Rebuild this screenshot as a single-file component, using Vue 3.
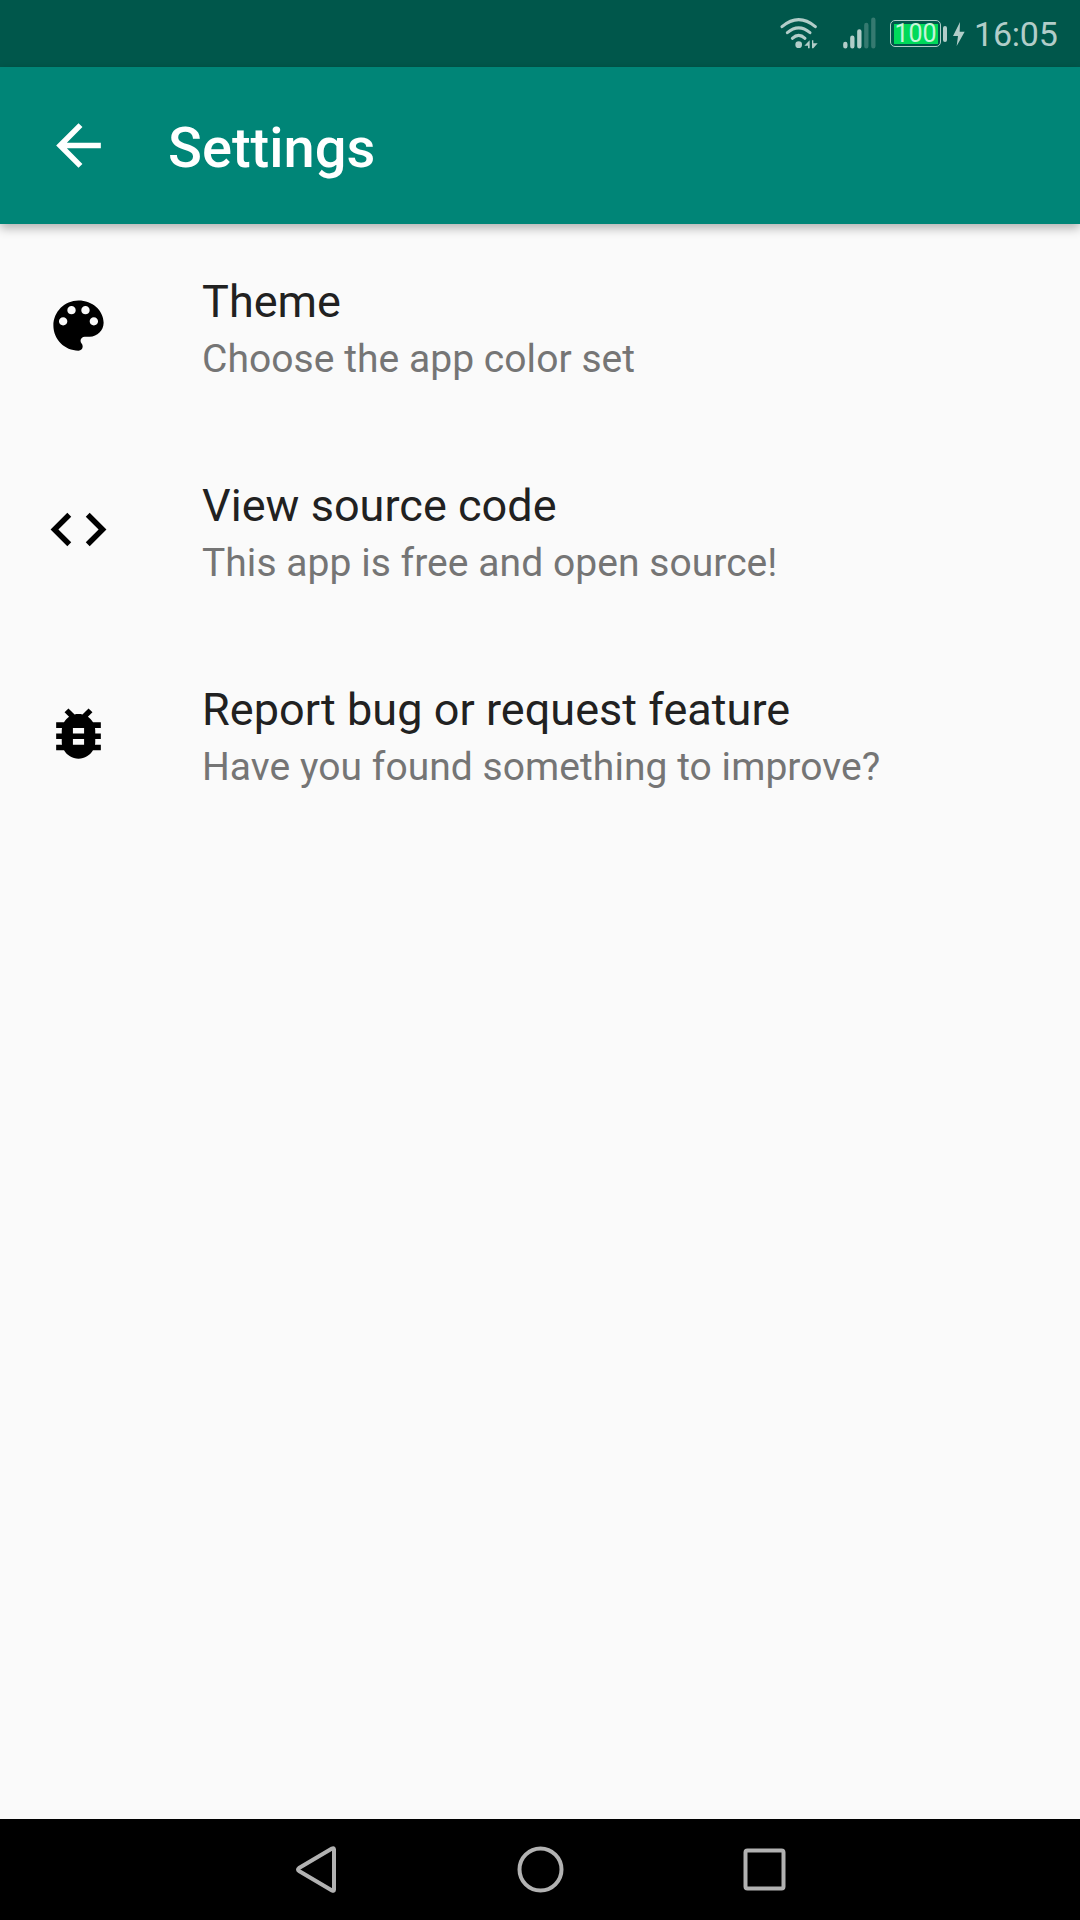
<script setup>
const items = [
  {
    title: 'Theme',
    summary: 'Choose the app color set',
    icon: 'M12 3c-4.97 0-9 4.03-9 9s4.03 9 9 9c.83 0 1.5-.67 1.5-1.5 0-.39-.15-.74-.39-1.01-.23-.26-.38-.61-.38-.99 0-.83.67-1.5 1.5-1.5H16c2.76 0 5-2.24 5-5 0-4.42-4.03-8-9-8zm-5.5 9c-.83 0-1.5-.67-1.5-1.5S5.67 9 6.5 9 8 9.67 8 10.5 7.33 12 6.5 12zm3-4C8.67 8 8 7.33 8 6.5S8.67 5 9.5 5s1.5.67 1.5 1.5S10.33 8 9.5 8zm5 0c-.83 0-1.5-.67-1.5-1.5S13.67 5 14.5 5s1.5.67 1.5 1.5S15.33 8 14.5 8zm3 4c-.83 0-1.5-.67-1.5-1.5S16.67 9 17.5 9s1.5.67 1.5 1.5-.67 1.5-1.5 1.5z',
  },
  {
    title: 'View source code',
    summary: 'This app is free and open source!',
    icon: 'M9.4 16.6L4.8 12l4.6-4.6L8 6l-6 6 6 6 1.4-1.4zm5.2 0l4.6-4.6-4.6-4.6L16 6l6 6-6 6-1.4-1.4z',
  },
  {
    title: 'Report bug or request feature',
    summary: 'Have you found something to improve?',
    icon: 'M20 8h-2.81c-.45-.78-1.07-1.45-1.82-1.96L17 4.41 15.59 3l-2.17 2.17C12.96 5.06 12.49 5 12 5c-.49 0-.96.06-1.41.17L8.41 3 7 4.41l1.62 1.63C7.88 6.55 7.26 7.22 6.81 8H4v2h2.09c-.05.33-.09.66-.09 1v1H4v2h2v1c0 .34.04.67.09 1H4v2h2.81c1.04 1.79 2.97 3 5.19 3s4.15-1.21 5.19-3H20v-2h-2.09c.05-.33.09-.66.09-1v-1h2v-2h-2v-1c0-.34-.04-.67-.09-1H20V8zm-6 8h-4v-2h4v2zm0-4h-4v-2h4v2z',
  },
]
</script>

<template>
  <div class="screen">
    <div class="status">
      <svg class="wifi" width="40" height="67" viewBox="0 0 120 201">
        <g fill="none" stroke="#b2cdc9" stroke-width="9" stroke-linecap="round">
          <path d="M6 80Q56 38 106 80" />
          <path d="M22 98Q56 69 90 98" />
          <path d="M37 115Q56 97 75 115" />
        </g>
        <g fill="#b2cdc9">
          <circle cx="56" cy="134" r="10" />
          <path d="M89 121v24h-5v-8H73zM96 121h4v9h13L100 145h-4z" />
        </g>
      </svg>
      <svg class="signal" width="34" height="67" viewBox="0 0 102 201">
        <g stroke="#b2cdc9" stroke-width="13" stroke-linecap="round">
          <path d="M7 132V139M28 113V139M49 94V139" />
          <path d="M70 75V139M91 59V139" stroke="#357a70" />
        </g>
      </svg>
      <div class="battery"><div class="level"><span>100</span></div></div>
      <div class="nub"></div>
      <svg class="bolt" width="12" height="24" viewBox="0 0 36 72">
        <path fill="#b2cdc9" d="M21 0L0 42H15L11 72 35 29H20z" />
      </svg>
      <span class="clock">16:05</span>
    </div>

    <header class="appbar">
      <svg class="back" width="67" height="67" viewBox="0 0 24 24">
        <path fill="#fff" d="M20 11H7.83l5.59-5.59L12 4l-8 8 8 8 1.41-1.41L7.83 13H20v-2z" />
      </svg>
      <h1>Settings</h1>
    </header>

    <main>
      <div v-for="item in items" :key="item.title" class="row">
        <svg class="icon" width="67" height="67" viewBox="0 0 24 24">
          <path :d="item.icon" />
        </svg>
        <div class="text">
          <div class="title">{{ item.title }}</div>
          <div class="summary">{{ item.summary }}</div>
        </div>
      </div>
    </main>

    <nav>
      <svg width="672" height="101" viewBox="0 0 672 101" fill="none" stroke="#b2b2b2" stroke-width="4" stroke-linejoin="round">
        <path d="M130 30.5Q130 28.5 128 29.5L95 49Q93 50.500 95 52L128 71.5Q130 72.5 130 70.5Z" />
        <circle cx="336.5" cy="50.5" r="21" />
        <rect x="541.5" y="31.5" width="38" height="38" rx="2" />
      </svg>
    </nav>
  </div>
</template>

<style>
body { margin: 0; }
</style>

<style scoped>
.screen {
  width: 1080px;
  height: 1920px;
  display: flex;
  flex-direction: column;
  background: #fafafa;
  font-family: Roboto, sans-serif;
  overflow: hidden;
}
.status {
  height: 67px;
  flex: none;
  box-sizing: border-box;
  padding-left: 780px;
  background: #00574b;
  color: #b2cdc9;
  display: flex;
  align-items: center;
}
.signal { margin-left: 23px; }
.battery {
  margin-left: 13px;
  box-sizing: border-box;
  width: 51px;
  height: 27px;
  border: 1.5px solid #b2cdc9;
  border-radius: 5px;
  padding: 2.5px;
}
.level {
  height: 20px;
  margin-top: 0.5px;
  background: #00d95a;
  color: #c5f5da;
  font-size: 25px;
  line-height: 20px;
  display: flex;
  justify-content: center;
}
.nub {
  width: 4px;
  height: 16px;
  margin-left: 2px;
  border-radius: 2px;
  background: #b2cdc9;
}
.bolt { margin-left: 6px; }
.clock {
  margin-left: 9px;
  padding-top: 1px;
  font-size: 34px;
  line-height: 67px;
  letter-spacing: -0.2px;
}
.appbar {
  position: relative;
  height: 157px;
  flex: none;
  display: flex;
  align-items: center;
  padding-left: 45px;
  background: #008577;
  box-shadow: 0 4px 10px rgba(0, 0, 0, 0.3);
}
h1 {
  margin: 5px 0 0 56px;
  color: #fff;
  font-size: 56px;
  line-height: 66px;
  font-weight: 500;
}
main { flex: 1; }
.row {
  height: 204px;
  display: flex;
  padding-left: 45px;
}
.icon { margin-top: 67.5px; flex: none; }
.text { margin: 51px 0 0 90px; }
.title {
  color: #212121;
  font-size: 45px;
  line-height: 53px;
  letter-spacing: 0.04px;
}
.summary {
  margin-top: 8px;
  color: #757575;
  font-size: 39px;
  line-height: 46px;
  letter-spacing: 0.05px;
}
nav {
  height: 101px;
  flex: none;
  display: flex;
  justify-content: center;
  background: #000;
}
</style>
